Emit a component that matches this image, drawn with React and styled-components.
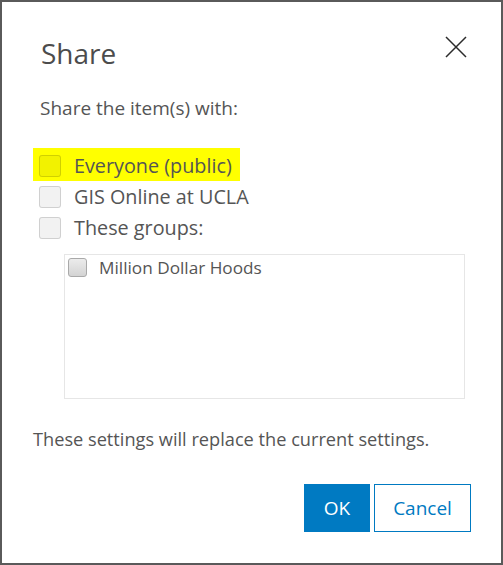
import React from "react";
import styled, { createGlobalStyle } from "styled-components";

const GlobalStyle = createGlobalStyle`
  html, body {
    margin: 0;
    padding: 0;
    background: #fff;
  }
  body {
    font-family: "Open Sans", Lato, "Liberation Sans", sans-serif;
  }
`;

const Dialog = styled.div`
  width: 503px;
  height: 565px;
  box-sizing: border-box;
  border: 2px solid #5a5a5a;
  background: #fff;
  display: flex;
  flex-direction: column;
  padding: 33px 30px 0 31px;
  color: #555;
`;

const Header = styled.div`
  display: flex;
  justify-content: space-between;
  align-items: flex-start;
`;

const Title = styled.h2`
  margin: 0 0 0 8px;
  font-size: 28px;
  line-height: 36px;
  font-weight: 400;
  color: #4c4c4c;
`;

const Close = styled.button`
  border: 0;
  background: none;
  padding: 0;
  margin: 1px 4px 0 0;
  width: 22px;
  height: 22px;
  cursor: pointer;
  svg {
    display: block;
  }
`;

const Intro = styled.p`
  margin: 25px 0 0 7px;
  font-size: 19px;
  line-height: 24px;
`;

const Options = styled.div`
  margin-top: 28px;
  display: flex;
  flex-direction: column;
  align-items: flex-start;
`;

const Option = styled.label`
  display: inline-flex;
  align-items: center;
  gap: 13px;
  height: 31px;
  font-size: 19.8px;
  padding: ${(p) => (p.$highlight ? "2px 8px 0 6px" : "0 0 0 6px")};
  background: ${(p) => (p.$highlight ? "#ffff00" : "transparent")};
`;

const Box = styled.span`
  width: 22px;
  height: 22px;
  box-sizing: border-box;
  border-radius: 3px;
  border: 1px solid rgba(0, 0, 0, 0.14);
  background: rgba(0, 0, 0, 0.05);
  flex-shrink: 0;
`;

const Groups = styled.div`
  margin: 11px 0 0 31px;
  width: 401px;
  height: 145px;
  box-sizing: border-box;
  border: 1px solid #e6e6e6;
  padding: 2px 3px;
`;

const Group = styled.label`
  display: flex;
  align-items: center;
  gap: 12px;
  height: 21px;
  font-size: 17.2px;
`;

const NativeBox = styled.span`
  width: 19px;
  height: 19px;
  box-sizing: border-box;
  border-radius: 3px;
  border: 1px solid #a9a9a9;
  background: linear-gradient(#ececec, #d3d3d3);
  flex-shrink: 0;
`;

const Note = styled.p`
  margin: 28px 0 0 0;
  font-size: 18.2px;
  line-height: 24px;
`;

const Footer = styled.div`
  margin-top: 33px;
  display: flex;
  justify-content: flex-end;
  gap: 4px;
`;

const Button = styled.button`
  height: 48px;
  min-width: ${(p) => p.$w}px;
  box-sizing: border-box;
  font-family: inherit;
  font-size: 19px;
  border: 1px solid #007ac2;
  background: ${(p) => (p.$primary ? "#007ac2" : "#fff")};
  color: ${(p) => (p.$primary ? "#fff" : "#007ac2")};
  padding: 0;
  cursor: pointer;
`;

export default function App() {
  return (
    <>
      <GlobalStyle />
      <Dialog>
        <Header>
          <Title>Share</Title>
          <Close aria-label="Close">
            <svg width="22" height="22" viewBox="0 0 22 22">
              <path d="M1 1 L21 21 M21 1 L1 21" stroke="#2b2b2b" strokeWidth="1.5" fill="none" />
            </svg>
          </Close>
        </Header>
        <Intro>Share the item(s) with:</Intro>
        <Options>
          <Option $highlight>
            <Box />
            Everyone (public)
          </Option>
          <Option>
            <Box />
            GIS Online at UCLA
          </Option>
          <Option>
            <Box />
            These groups:
          </Option>
        </Options>
        <Groups>
          <Group>
            <NativeBox />
            Million Dollar Hoods
          </Group>
        </Groups>
        <Note>These settings will replace the current settings.</Note>
        <Footer>
          <Button $primary $w={66}>OK</Button>
          <Button $w={97}>Cancel</Button>
        </Footer>
      </Dialog>
    </>
  );
}
